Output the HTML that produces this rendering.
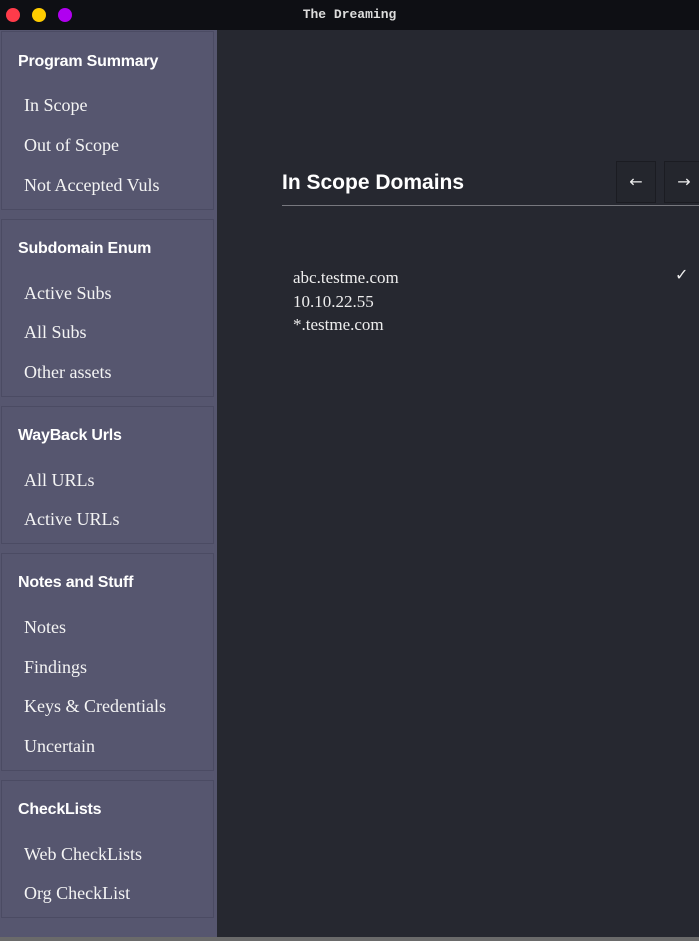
<!DOCTYPE html>
<html><head><style>
*{margin:0;padding:0;box-sizing:border-box}
body{width:699px;height:941px;overflow:hidden;background:#262830;position:relative;font-family:"Liberation Serif",serif;color:#f2f2f2}
.tb{position:absolute;left:0;top:0;width:699px;height:30px;background:#0e0f14}
.tb .d{position:absolute;top:8px;width:14px;height:14px;border-radius:50%}
.tb .t{position:absolute;left:0;right:0;top:7px;text-align:center;font:bold 13px "Liberation Mono",monospace;color:#ddd}
.sb{position:absolute;left:0;top:30px;width:217px;height:907px;background:#56566f}
.p{position:absolute;left:1px;width:213px;border:1px solid #4b4b63}
.h{position:absolute;left:18px;font:bold 16px "Liberation Sans",sans-serif;color:#fff;letter-spacing:-0.2px}
.i{position:absolute;left:24px;font-size:18px;color:#f4f4f4}
.bot{position:absolute;left:0;top:937px;width:699px;height:4px;background:#6a6a6a}
.btn{position:absolute;top:161px;width:40px;height:42px;border:1px solid #1b1c22;background:#24262d;color:#eee;font:16px "DejaVu Sans",sans-serif;text-align:center;line-height:40px}
.li{position:absolute;left:293px;font-size:17px;color:#eee}
</style></head><body>
<div class="tb">
<div class="d" style="left:6px;background:#ff3b4a"></div>
<div class="d" style="left:32px;background:#ffcc00"></div>
<div class="d" style="left:58px;background:#b000f0"></div>
<div class="t">The Dreaming</div>
</div>
<div class="sb">
<div class="p" style="top:1px;height:179px"></div>
<div class="p" style="top:189px;height:178px"></div>
<div class="p" style="top:376px;height:138px"></div>
<div class="p" style="top:523px;height:218px"></div>
<div class="p" style="top:750px;height:138px"></div>
</div>
<div class="h" style="top:53px">Program Summary</div>
<div class="i" style="top:95px">In Scope</div>
<div class="i" style="top:135px">Out of Scope</div>
<div class="i" style="top:175px">Not Accepted Vuls</div>
<div class="h" style="top:240px">Subdomain Enum</div>
<div class="i" style="top:283px">Active Subs</div>
<div class="i" style="top:322px">All Subs</div>
<div class="i" style="top:362px">Other assets</div>
<div class="h" style="top:427px">WayBack Urls</div>
<div class="i" style="top:470px">All URLs</div>
<div class="i" style="top:509px">Active URLs</div>
<div class="h" style="top:574px">Notes and Stuff</div>
<div class="i" style="top:617px">Notes</div>
<div class="i" style="top:657px">Findings</div>
<div class="i" style="top:696px">Keys &amp; Credentials</div>
<div class="i" style="top:736px">Uncertain</div>
<div class="h" style="top:801px">CheckLists</div>
<div class="i" style="top:844px">Web CheckLists</div>
<div class="i" style="top:883px">Org CheckList</div>
<div style="position:absolute;left:282px;top:171px;font:bold 21px 'Liberation Sans',sans-serif;color:#fff">In Scope Domains</div>
<div style="position:absolute;left:282px;top:205px;width:417px;height:1px;background:#77787e"></div>
<div class="btn" style="left:616px">←</div>
<div class="btn" style="left:664px">→</div>
<div class="li" style="top:268px">abc.testme.com</div>
<div class="li" style="top:292px">10.10.22.55</div>
<div class="li" style="top:315px">*.testme.com</div>
<div style="position:absolute;left:675px;top:265px;font:16px 'DejaVu Sans',sans-serif;color:#eee">✓</div>
<div class="bot"></div>
</body></html>
